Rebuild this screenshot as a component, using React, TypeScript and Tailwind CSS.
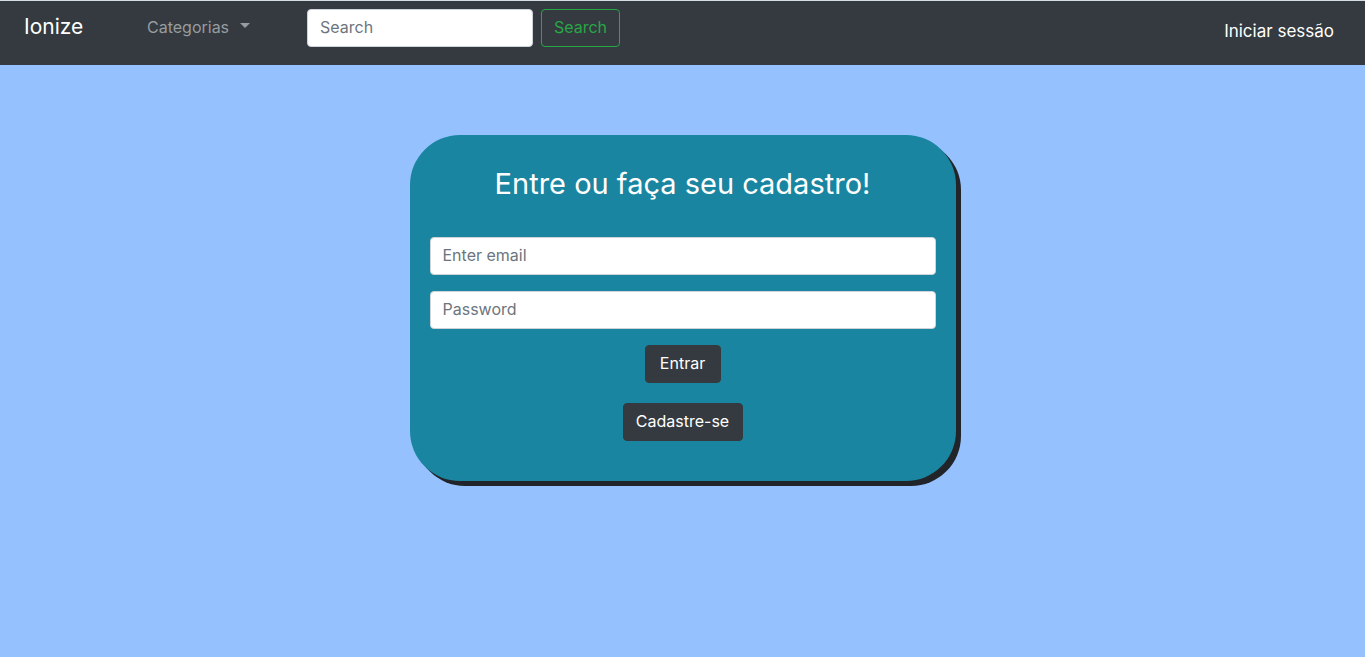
const field =
  "h-[38px] rounded border border-[#ced4da] bg-white px-3 pb-[2px] text-base text-[#495057] placeholder:text-[#6c757d]";
const darkButton =
  "h-[38px] rounded border border-[#343a40] bg-[#343a40] pb-[2px] text-base text-white";

function Navbar() {
  return (
    <header className="border-t border-[#d5dfe2] bg-[#343a40]">
      <nav className="flex h-16 items-start px-6 pt-2">
        <a href="#" className="w-[123px] text-[21px] leading-9 text-white">
          Ionize
        </a>
        <button type="button" className="flex w-40 items-center text-base leading-9 text-[#999c9f]">
          <span className="w-[93px] text-left">Categorias</span>
          <svg width="10" height="5" viewBox="0 0 10 5" className="mb-1" fill="currentColor" aria-hidden="true">
            <path d="M0 0h10L5 5z" />
          </svg>
        </button>
        <form className="flex gap-2" onSubmit={(e) => e.preventDefault()}>
          <input type="search" aria-label="Search" placeholder="Search" className={`${field} w-[226px]`} />
          <button
            type="submit"
            className="h-[38px] w-[79px] rounded border border-[#28a745] pb-[2px] text-base text-[#28a745]"
          >
            Search
          </button>
        </form>
        <a href="#" className="mr-[7px] ml-auto pt-1 text-[17px] leading-9 text-white">
          Iniciar sessão
        </a>
      </nav>
    </header>
  );
}

export default function App() {
  return (
    <div className="min-h-screen bg-[#95c2ff] font-['Inter','Open_Sans',sans-serif]">
      <Navbar />
      <main className="flex justify-center pt-[70px]">
        <section className="w-2/5 rounded-[50px] bg-[#1a85a0] px-5 pt-8 pb-10 shadow-[5px_5px_0_#212529]">
          <h1 className="text-center text-[29px] leading-[34px] whitespace-nowrap text-white">
            Entre ou faça seu cadastro!
          </h1>
          <form className="mt-9 flex flex-col items-center" onSubmit={(e) => e.preventDefault()}>
            <input type="email" aria-label="Email" placeholder="Enter email" className={`${field} w-full`} />
            <input
              type="password"
              aria-label="Password"
              placeholder="Password"
              className={`${field} mt-4 w-full`}
            />
            <button type="submit" className={`${darkButton} mt-4 w-[76px]`}>
              Entrar
            </button>
            <button type="button" className={`${darkButton} mt-5 w-[120px]`}>
              Cadastre-se
            </button>
          </form>
        </section>
      </main>
    </div>
  );
}
